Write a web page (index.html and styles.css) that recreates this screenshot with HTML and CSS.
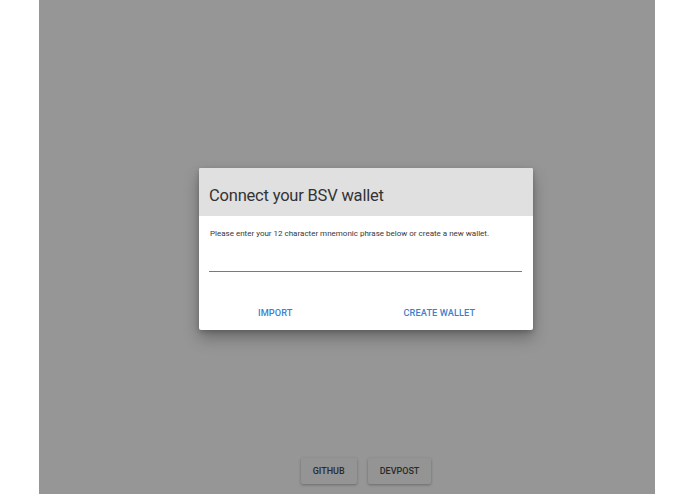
FILE: index.html
```html
<!DOCTYPE html>
<html>
<head>
<meta charset="utf-8">
<link rel="stylesheet" href="styles.css">
</head>
<body>
<div class="app">
  <div class="stage">
    <div class="dialog">
      <div class="dialog-title">Connect your BSV wallet</div>
      <div class="dialog-body">
        <p class="dialog-text">Please enter your 12 character mnemonic phrase below or create a new wallet.</p>
        <div class="field"></div>
      </div>
      <div class="dialog-actions">
        <span class="action action-import">IMPORT</span>
        <span class="action action-create">CREATE WALLET</span>
      </div>
    </div>
  </div>
  <div class="footer">
    <span class="btn">GITHUB</span>
    <span class="btn">DEVPOST</span>
  </div>
</div>
</body>
</html>
```
FILE: styles.css
```css
html, body {
  margin: 0;
  padding: 0;
  background: #ffffff;
  font-family: Roboto, "Liberation Sans", Arial, sans-serif;
}
.app {
  width: 616px;
  height: 494px;
  margin-left: 39px;
  background: #969696;
  display: flex;
  flex-direction: column;
  box-sizing: border-box;
  padding-left: 38px;
}
.stage {
  flex: 1;
  display: flex;
  align-items: flex-start;
  justify-content: center;
  padding-top: 168px;
}
.dialog {
  width: 334px;
  height: 162px;
  background: #ffffff;
  border-radius: 2px;
  box-shadow: 0 8px 16px rgba(0,0,0,0.28), 0 2px 5px rgba(0,0,0,0.2);
  display: flex;
  flex-direction: column;
  overflow: hidden;
}
.dialog-title {
  height: 48px;
  background: #e0e0e0;
  box-sizing: border-box;
  padding: 18px 0 0 10px;
  font-size: 16.5px;
  letter-spacing: -0.2px;
  color: #333333;
  line-height: 20px;
}
.dialog-body {
  padding: 0 11px 0 10px;
}
.dialog-text {
  margin: 0;
  padding-top: 13px;
  padding-left: 1px;
  font-size: 8px;
  line-height: 10px;
  color: #383838;
}
.dialog-actions {
  display: flex;
  padding: 35px 0 0 59px;
  gap: 111px;
}
.field {
  margin-top: 32px;
  height: 0;
  border-bottom: 1px solid #7a7a7a;
}
.action {
  font-size: 9.2px;
  font-weight: 500;
  color: #3d7fcf;
  line-height: 12px;
  letter-spacing: 0.1px;
}
.footer {
  height: 36px;
  display: flex;
  justify-content: center;
  align-items: flex-start;
  gap: 11px;
}
.btn {
  height: 26px;
  line-height: 26px;
  padding: 0 12px;
  background: #949494;
  color: #2a2a2a;
  font-size: 9px;
  font-weight: 500;
  border-radius: 2px;
  box-shadow: 0 1px 3px rgba(0,0,0,0.3);
  box-sizing: border-box;
}
```
